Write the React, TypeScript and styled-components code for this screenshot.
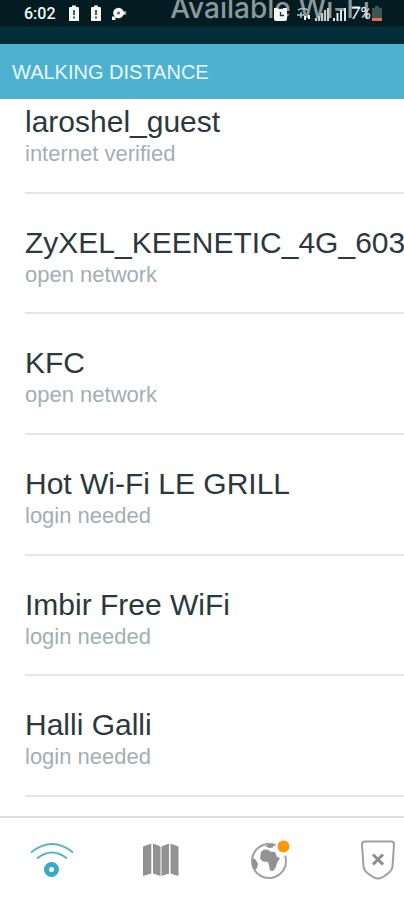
import React from "react";
import styled, { createGlobalStyle } from "styled-components";

const GlobalStyle = createGlobalStyle`
  *, *::before, *::after { box-sizing: border-box; }
  body { margin: 0; background: #fff; font-family: "Liberation Sans", Arial, Helvetica, sans-serif; }
`;

const Screen = styled.div`
  display: flex;
  flex-direction: column;
  min-height: 100vh;
  overflow: hidden;
`;

const TopBar = styled.header`
  position: relative;
  z-index: 1;
  height: 44px;
  overflow: hidden;
  background: linear-gradient(#021c22 0 26px, #032e38 27px 100%);
`;

const Title = styled.h1`
  margin: 0;
  padding-left: 136px;
  height: 44px;
  font-family: Inter, sans-serif;
  font-size: 28px;
  font-weight: 500;
  line-height: 16px;
  text-align: center;
  white-space: nowrap;
  color: #8d989b;
`;

const StatusBar = styled.div`
  position: absolute;
  inset: 0 0 auto;
  display: flex;
  justify-content: space-between;
  height: 27px;
  padding: 0 22px 0 24px;
  color: #f4f8f8;
`;

const StatusGroup = styled.div<{ $gap: number }>`
  display: flex;
  align-items: center;
  gap: ${({ $gap }) => $gap}px;
`;

const Clock = styled.time`
  font: 500 16px/27px Roboto, sans-serif;
  margin-right: 2px;
`;

const Percent = styled.span`
  font: italic 400 16px/27px Roboto, sans-serif;
`;

const SectionTitle = styled.h2`
  position: relative;
  z-index: 1;
  margin: 0;
  padding: 1px 12px 0;
  background: #4db1cf;
  color: #e9f8fc;
  font-size: 20px;
  font-weight: 400;
  line-height: 54px;
`;

const NetworkList = styled.ul`
  flex: 1;
  display: flex;
  flex-direction: column;
  margin: -26px 0 0;
  padding: 0 0 19px 25px;
  list-style: none;
`;

const NetworkRow = styled.li`
  flex: 1 0 auto;
  padding-top: 30px;
  border-bottom: 2px solid #e3e5e6;
  white-space: nowrap;
`;

const NetworkName = styled.div`
  font-size: 30px;
  line-height: 37px;
  color: #2c383d;
`;

const NetworkStatus = styled.div`
  font-size: 22px;
  line-height: 27px;
  color: #a3afb3;
`;

const TabBar = styled.nav`
  display: flex;
  justify-content: space-between;
  height: 84px;
  padding: 2px 4px 0 30px;
  border-top: 2px solid #dedede;
  background: #fff;
`;

const TabButton = styled.button`
  display: flex;
  align-items: center;
  justify-content: center;
  width: 44px;
  padding: 0;
  border: 0;
  background: none;
  cursor: pointer;
`;

const networks = [
  { name: "laroshel_guest", status: "internet verified" },
  { name: "ZyXEL_KEENETIC_4G_6030", status: "open network" },
  { name: "KFC", status: "open network" },
  { name: "Hot Wi-Fi LE GRILL", status: "login needed" },
  { name: "Imbir Free WiFi", status: "login needed" },
  { name: "Halli Galli", status: "login needed" },
];

const BatteryAlertIcon = () => (
  <svg width="12" height="17" viewBox="0 0 12 17" aria-hidden="true">
    <path d="M4 .5h4v1.500h2.200l.8.8V16H1V2.800L1.800 2H4z" fill="currentColor" />
    <path d="M6 5v5M6 11.500v2" stroke="#021c22" strokeWidth="1.400" />
  </svg>
);

const MessageIcon = () => (
  <svg width="15" height="15" viewBox="0 0 15 15" aria-hidden="true">
    <circle cx="6.500" cy="7" r="5.300" fill="currentColor" />
    <path d="M0 14v-3.500h3.500V14zM11 5.500h2v3h-2z" fill="currentColor" />
    <circle cx="6.500" cy="7" r="1.500" fill="#54676b" />
    <path d="M13.500 5v4" stroke="#819095" strokeWidth="1.500" />
  </svg>
);

const StatusIcons = () => (
  <svg width="76" height="18" viewBox="0 0 76 18" aria-hidden="true">
    <path d="M0 3h4v3H0zM9 3h4v3H9z" fill="currentColor" />
    <rect x="0" y="4" width="13" height="12" rx="2" fill="currentColor" />
    <path d="M6.500 7v3.500H10" fill="none" stroke="#17343b" strokeWidth="1.300" />
    <path d="M24 5q5-3 10 0M23 10h7M27 7v6" fill="none" stroke="#b7c4c5" strokeWidth="1.500" />
    <path d="M31 11v4M35 10v4" stroke="#f4f8f8" strokeWidth="2" />
    <path d="M42 16v-3M45 16v-5M48 16V8M51 16V5M54 16V3" stroke="#c5cdce" strokeWidth="2.200" />
    <path d="M60 16v-3M63.500 16V8M67 16V5M71 16V3" stroke="#e2e8e9" strokeWidth="2" />
  </svg>
);

const LowBatteryIcon = () => (
  <svg width="10" height="15" viewBox="0 0 10 15" aria-hidden="true">
    <path d="M3 0h4v2h3v13H0V2h3z" fill="#3d5356" />
    <path d="M0 12h10v3H0z" fill="#e66b48" />
  </svg>
);

const HotspotIcon = () => (
  <svg width="44" height="36" viewBox="0 0 44 36" fill="none" aria-hidden="true">
    <path d="M1 10.500Q22-6.500 43 10.500M7 16.500Q22 4.500 37 16.500" stroke="#54b4c9" strokeWidth="2" />
    <circle cx="21.500" cy="27.500" r="5" stroke="#39a9c5" strokeWidth="5" />
  </svg>
);

const MapIcon = () => (
  <svg width="36" height="34" viewBox="0 0 36 34" aria-hidden="true">
    <path d="M0 3.500 8.300.500v30L0 33zM10 .500l7.500 3V33L10 30.500zM18.500 3.500 26 .500v30L18.500 33zM27.500.500l8 3V33l-8-2.500z" fill="#929292" />
  </svg>
);

const GlobeIcon = () => (
  <svg width="42" height="40" viewBox="0 0 42 40" aria-hidden="true">
    <circle cx="21" cy="21" r="17" fill="none" stroke="#a0a0a0" strokeWidth="2" />
    <path d="m13 12 3-2.500 5 .5 1 1.500 5 .5 2 5 3 1-3 5-1 4-3 4-3-.5-1-5-1-3.500-5-.5-3-3zM17 6l6-2 3 .5-1 3-4 .5zM5 18l3 2 2 4-1 4-2 2-3-5z" fill="#929292" />
    <circle cx="35.500" cy="7.500" r="8.500" fill="#fff" />
    <circle cx="35.500" cy="6.500" r="6" fill="#fb980c" />
  </svg>
);

const ShieldIcon = () => (
  <svg width="36" height="40" viewBox="0 0 36 40" fill="none" aria-hidden="true">
    <path d="M4.500 1.500h27q2.500 0 2.500 3l-1.500 22q-.5 4-4 6.500Q22 38.500 18 38.500T7.500 33q-3.500-2.500-4-6.500L2 4.500q0-3 2.500-3z" stroke="#a0a0a0" strokeWidth="2" />
    <path d="m13 14.500 10 10m0-10-10 10" stroke="#8d8d8d" strokeWidth="3" />
  </svg>
);

const tabs = [
  { label: "Available Wi-Fi", Icon: HotspotIcon },
  { label: "Map", Icon: MapIcon },
  { label: "Explore", Icon: GlobeIcon },
  { label: "Protection", Icon: ShieldIcon },
];

export default function App() {
  return (
    <>
      <GlobalStyle />
      <Screen>
        <TopBar>
          <Title>Available Wi-Fi</Title>
          <StatusBar>
            <StatusGroup $gap={10}>
              <Clock>6:02</Clock>
              <BatteryAlertIcon />
              <BatteryAlertIcon />
              <MessageIcon />
            </StatusGroup>
            <StatusGroup $gap={1}>
              <StatusIcons />
              <Percent>7%</Percent>
              <LowBatteryIcon />
            </StatusGroup>
          </StatusBar>
        </TopBar>
        <SectionTitle>WALKING DISTANCE</SectionTitle>
        <NetworkList>
          {networks.map(({ name, status }) => (
            <NetworkRow key={name}>
              <NetworkName>{name}</NetworkName>
              <NetworkStatus>{status}</NetworkStatus>
            </NetworkRow>
          ))}
        </NetworkList>
        <TabBar>
          {tabs.map(({ label, Icon }) => (
            <TabButton key={label} type="button" aria-label={label}>
              <Icon />
            </TabButton>
          ))}
        </TabBar>
      </Screen>
    </>
  );
}
